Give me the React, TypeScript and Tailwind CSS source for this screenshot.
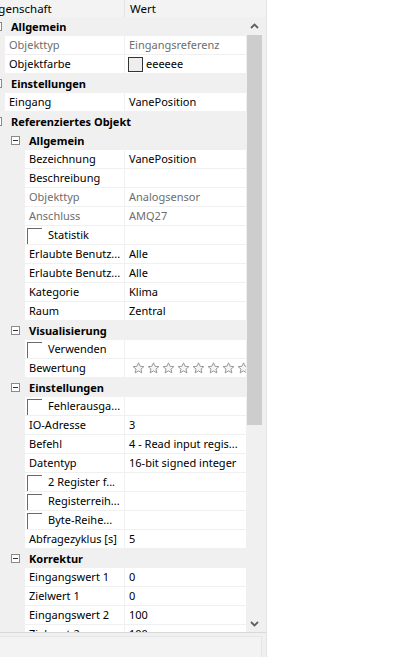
import React from "react";

type Row =
  | { kind: "cat"; level: 1 | 2; label: string }
  | {
      kind: "item";
      level: 1 | 2;
      label: string;
      value?: string;
      disabled?: boolean;
      checkbox?: boolean;
      color?: boolean;
      stars?: boolean;
    };

const rows: Row[] = [
  { kind: "cat", level: 1, label: "Allgemein" },
  { kind: "item", level: 1, label: "Objekttyp", value: "Eingangsreferenz", disabled: true },
  { kind: "item", level: 1, label: "Objektfarbe", value: "eeeeee", color: true },
  { kind: "cat", level: 1, label: "Einstellungen" },
  { kind: "item", level: 1, label: "Eingang", value: "VanePosition" },
  { kind: "cat", level: 1, label: "Referenziertes Objekt" },
  { kind: "cat", level: 2, label: "Allgemein" },
  { kind: "item", level: 2, label: "Bezeichnung", value: "VanePosition" },
  { kind: "item", level: 2, label: "Beschreibung", value: "" },
  { kind: "item", level: 2, label: "Objekttyp", value: "Analogsensor", disabled: true },
  { kind: "item", level: 2, label: "Anschluss", value: "AMQ27", disabled: true },
  { kind: "item", level: 2, label: "Statistik", checkbox: true },
  { kind: "item", level: 2, label: "Erlaubte Benutz...", value: "Alle" },
  { kind: "item", level: 2, label: "Erlaubte Benutz...", value: "Alle" },
  { kind: "item", level: 2, label: "Kategorie", value: "Klima" },
  { kind: "item", level: 2, label: "Raum", value: "Zentral" },
  { kind: "cat", level: 2, label: "Visualisierung" },
  { kind: "item", level: 2, label: "Verwenden", checkbox: true },
  { kind: "item", level: 2, label: "Bewertung", stars: true },
  { kind: "cat", level: 2, label: "Einstellungen" },
  { kind: "item", level: 2, label: "Fehlerausga...", checkbox: true },
  { kind: "item", level: 2, label: "IO-Adresse", value: "3" },
  { kind: "item", level: 2, label: "Befehl", value: "4 - Read input regis..." },
  { kind: "item", level: 2, label: "Datentyp", value: "16-bit signed integer" },
  { kind: "item", level: 2, label: "2 Register f...", checkbox: true },
  { kind: "item", level: 2, label: "Registerreih...", checkbox: true },
  { kind: "item", level: 2, label: "Byte-Reihe...", checkbox: true },
  { kind: "item", level: 2, label: "Abfragezyklus [s]", value: "5" },
  { kind: "cat", level: 2, label: "Korrektur" },
  { kind: "item", level: 2, label: "Eingangswert 1", value: "0" },
  { kind: "item", level: 2, label: "Zielwert 1", value: "0" },
  { kind: "item", level: 2, label: "Eingangswert 2", value: "100" },
  { kind: "item", level: 2, label: "Zielwert 2", value: "100" },
];

function Star() {
  return (
    <svg width="13" height="12" viewBox="0 0 13 12" className="shrink-0">
      <path
        d="M6.5 0.8 L8.1 4.3 L11.9 4.6 L9 7.1 L9.9 10.9 L6.5 8.9 L3.1 10.9 L4 7.1 L1.1 4.6 L4.9 4.3 Z"
        fill="#f4f4f4"
        stroke="#9a9a9a"
        strokeWidth="1"
        strokeLinejoin="round"
      />
    </svg>
  );
}

function MinusBox({ left }: { left: number }) {
  return (
    <span
      className="absolute top-[5px] w-[9px] h-[9px] border border-[#8a8a8a] bg-white flex items-center justify-center"
      style={{ left }}
    >
      <span className="w-[5px] h-px bg-[#333]" />
    </span>
  );
}

function Chevron({ up }: { up?: boolean }) {
  return (
    <svg width="9" height="6" viewBox="0 0 9 6">
      <path
        d={up ? "M1 5 L4.5 1.5 L8 5" : "M1 1 L4.5 4.5 L8 1"}
        fill="none"
        stroke="#606060"
        strokeWidth="1.8"
      />
    </svg>
  );
}

function GridRow({ row }: { row: Row }) {
  const gutter = row.level === 1 ? 5 : 25;
  if (row.kind === "cat") {
    return (
      <div className="relative h-[19px] shrink-0 flex items-center bg-[#f0f0f0]">
        <MinusBox left={row.level === 1 ? -7 : 11} />
        <span
          className="font-bold text-black whitespace-nowrap leading-[18px]"
          style={{ paddingLeft: row.level === 1 ? 11 : 29 }}
        >
          {row.label}
        </span>
      </div>
    );
  }
  const textColor = row.disabled ? "text-[#6d6d6d]" : "text-black";
  return (
    <div className="h-[19px] shrink-0 flex">
      <div className="shrink-0" style={{ width: gutter }} />
      <div className="flex-1 flex bg-white border-b border-[#f0f0f0] min-w-0">
        <div
          className={`relative h-full shrink-0 border-r border-[#f0f0f0] flex items-center whitespace-nowrap overflow-hidden ${textColor}`}
          style={{ width: 125 - gutter }}
        >
          {row.checkbox ? (
            <>
              <span className="absolute left-[2px] top-[2px] w-[15px] h-[17px] border-l border-t border-[#6a6a6a]" />
              <span className="pl-[23px] leading-[18px]">{row.label}</span>
            </>
          ) : (
            <span className="pl-[4px] leading-[18px]">{row.label}</span>
          )}
        </div>
        <div className={`flex-1 min-w-0 flex items-center whitespace-nowrap overflow-hidden ${textColor}`}>
          {row.color ? (
            <div className="flex items-center pl-[3px]">
              <span className="w-[15px] h-[15px] border border-[#333] bg-[#eeeeee]" />
              <span className="pl-[3px] leading-[18px]">{row.value}</span>
            </div>
          ) : row.stars ? (
            <div className="flex items-center gap-[2px] pl-[7px]">
              {Array.from({ length: 9 }).map((_, i) => (
                <Star key={i} />
              ))}
            </div>
          ) : (
            <span className="pl-[4px] leading-[18px]">{row.value}</span>
          )}
        </div>
      </div>
    </div>
  );
}

export default function App() {
  return (
    <div
      className="w-[412px] h-[657px] bg-white flex overflow-hidden text-[11px]"
      style={{ fontFamily: '"Noto Sans", "Open Sans", sans-serif' }}
    >
      <div className="w-[267px] h-full shrink-0 bg-[#f0f0f0] border-r border-[#e3e3e3] flex flex-col">
        <div className="h-[17px] shrink-0 flex bg-[#f3f3f3]">
          <div className="w-[125px] shrink-0 overflow-hidden border-r border-[#e3e3e3] flex items-center">
            <span className="ml-[-11px] whitespace-nowrap text-black leading-[17px] text-[11.5px]">Eigenschaft</span>
          </div>
          <div className="flex-1 flex items-center">
            <span className="pl-[5px] text-black leading-[17px] text-[11.5px]">Wert</span>
          </div>
        </div>
        <div className="flex-1 min-h-0 flex">
          <div className="w-[246px] shrink-0 h-full overflow-hidden flex flex-col">
            {rows.map((r, i) => (
              <GridRow key={i} row={r} />
            ))}
          </div>
          <div className="w-[16px] shrink-0 h-full bg-[#f0f0f0] flex flex-col items-center">
            <div className="h-[18px] shrink-0 flex items-center justify-center">
              <Chevron up />
            </div>
            <div className="w-[15px] h-[390px] bg-[#cdcdcd] shrink-0" />
            <div className="flex-1" />
            <div className="h-[17px] shrink-0 flex items-center justify-center">
              <Chevron />
            </div>
          </div>
        </div>
        <div className="h-[25px] shrink-0 border-t border-[#d9d9d9] flex">
          <div className="w-[262px] mt-[3px] border-t border-r border-[#e6e6e6] bg-[#f3f3f3]" />
        </div>
      </div>
      <div className="flex-1 bg-white" />
    </div>
  );
}
